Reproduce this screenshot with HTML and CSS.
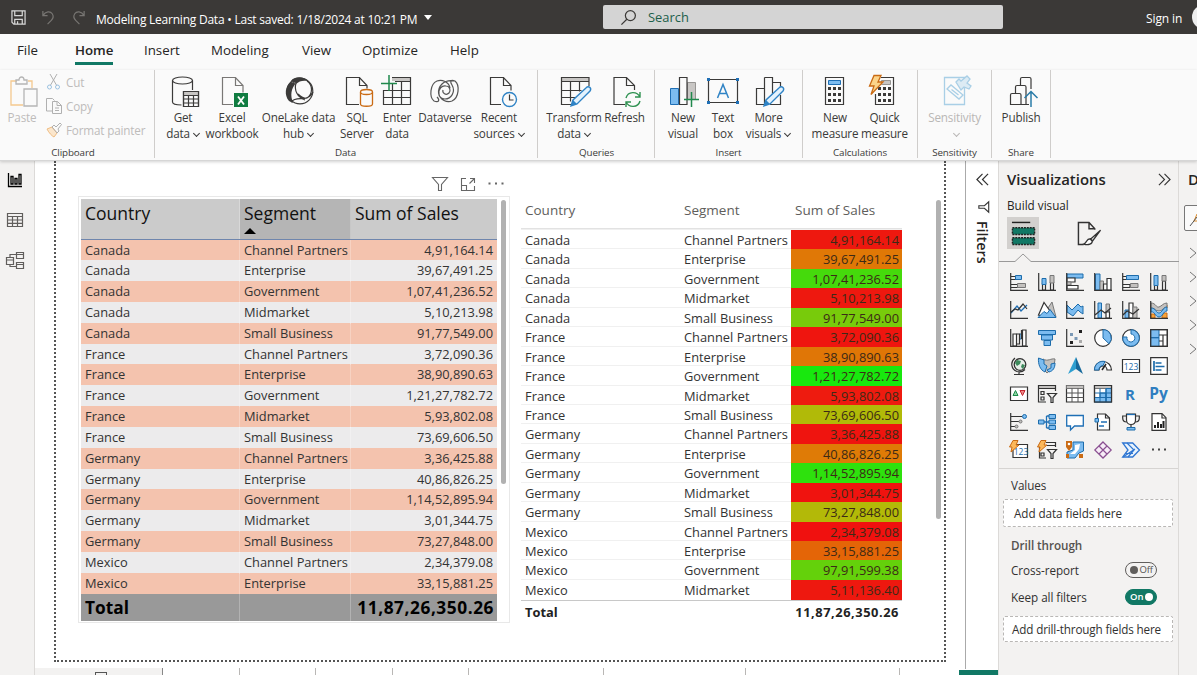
FILE: index.html
```html
<!DOCTYPE html>
<html lang="en">
<head>
<meta charset="utf-8">
<title>Modeling Learning Data</title>
<link rel="stylesheet" href="styles.css">
</head>
<body>
<div class="app">
<header class="titlebar">
  <svg class="tb-icon save" viewBox="0 0 16 16"><path d="M1 1h14v14H3l-2-2zM4 1v5h8V1M4 15v-5h8v5M7 12v3"/></svg>
  <svg class="tb-icon dim" viewBox="0 0 16 16"><path d="M2 1v5h5M2 6c3-5 8-5 10-2s1 5-1 7l-4 4"/></svg>
  <svg class="tb-icon dim" viewBox="0 0 16 16"><path d="M14 1v5H9M14 6C11 1 6 1 4 4s-1 5 1 7l4 4"/></svg>
  <div class="doc-title">Modeling Learning Data • Last saved: 1/18/2024 at 10:21 PM</div>
  <span class="caret"></span>
  <div class="search"><svg viewBox="0 0 18 18"><circle cx="11" cy="7" r="5.3"/><path d="M7.2 10.8 1.5 16.500"/></svg><span>Search</span></div>
  <div class="signin">Sign in</div>
  <div class="avatar"></div>
</header>
<nav class="tabs">
  <span class="tab t-file">File</span><span class="tab t-home active">Home</span><span class="tab t-insert">Insert</span><span class="tab t-model">Modeling</span><span class="tab t-view">View</span><span class="tab t-opt">Optimize</span><span class="tab t-help">Help</span>
</nav>
<section class="ribbon">
  <div class="group g-clip">
    <div class="clip">
      <div class="paste"><svg viewBox="0 0 32 32"><g fill="none" stroke-width="1.300"><path d="M7 5H1v24h12M18 5h4v7" stroke="#f5c98f"/><path d="M6 8V4h3c0-4 5-4 5 0h3v4z" stroke="#b5b5b5"/><path d="M14 13h13v17H14z" stroke="#b5b5b5"/></g></svg><span>Paste</span></div>
      <div class="clip-list">
        <div class="clip-item"><svg viewBox="0 0 16 16"><path d="M4 0l7 12M11 0L4 12" stroke="#b0b0b0"/><circle cx="3.500" cy="13" r="2" stroke="#9cc3e2"/><circle cx="11.500" cy="13" r="2" stroke="#9cc3e2"/></svg><span>Cut</span></div>
        <div class="clip-item"><svg viewBox="0 0 16 16"><path d="M6 13H.5V.5h6l2 2M6.500 3.500h5l4 4v8h-9zM11 3.500v4h4.500M9 10h4M9 12.500h4" stroke="#b0b0b0"/></svg><span>Copy</span></div>
        <div class="clip-item"><svg viewBox="0 0 16 16"><path d="M1 7l5-2 5 6-3 4c-2-1-5-4-7-8z" stroke="#f0bd82" fill="#fbe6cc"/><path d="M6 5l2-2 2 2 4-4 1.500 1.500L12 7l1 2-2 2z" stroke="#b0b0b0"/></svg><span>Format painter</span></div>
      </div>
    </div>
    <div class="glabel">Clipboard</div>
  </div>

  <div class="group g-data">
    <div class="btns">
      <div class="btn"><svg viewBox="0 0 32 32"><path class="k" d="M5.500 4.500V26c0 2 4 3 9 3M25.500 4.500V14"/><ellipse class="k" cx="15.500" cy="4.500" rx="10" ry="3.500"/><path class="kw" d="M16.500 15.500h15v15h-15z"/><path class="g" d="M17 16h14v3.500H17z"/><path class="k" d="M16.500 15.500h15v15h-15zM16.500 19.500h15M16.500 23h15M16.500 27h15M21.500 19.500v11M26.500 19.500v11"/></svg><span>Get<br>data<i class="chev"></i></span></div>
      <div class="btn"><svg viewBox="0 0 32 32"><path class="gy" d="M17 28.500H6.500v-27h13l7.500 8v7M19.500 1.500v8H27"/><path fill="#107c41" d="M18 17h14v14H18z"/><path d="M22 20.500l6 8M28 20.500l-6 8" stroke="#fff" stroke-width="1.800"/></svg><span>Excel<br>workbook</span></div>
      <div class="btn"><svg viewBox="0 0 32 32"><circle class="k" cx="17" cy="15" r="12.800"/><path d="M8 6C2 10 1 19 6 25l4 2c-3-8-2-14 3-20zM8 5c3-5 13-5 17 0-5-1-9 0-12 3z" fill="#3b3a39"/><path class="k" d="M13 7c-2 7 1 14 9 17M24 5c6 4 6 13 0 17-3 1-6-1-9-4M8 26c5-6 12-2 15-4 4-1 6-4 7-6"/></svg><span>OneLake data<br>hub<i class="chev"></i></span></div>
      <div class="btn"><svg viewBox="0 0 32 32"><path class="k" d="M18 28.500H5.500v-27h13l7.500 8v3M18.500 1.500v8H26"/><path d="M19.500 16v12c0 3 12 3 12 0V16" stroke="#ca6b14" stroke-width="1.300" fill="#fafafa"/><ellipse cx="25.500" cy="16" rx="6" ry="2.500" stroke="#ca6b14" stroke-width="1.300" fill="#fafafa"/></svg><span>SQL<br>Server</span></div>
      <div class="btn"><svg viewBox="0 0 32 32"><path class="g" d="M11 1h19v4H11z"/><path class="k" d="M11 1.500h18.500v27h-27V14M14 5.500h15.500M2.500 14.500h27M2.500 21.500h27M11.500 8v20.500M20.500 5.500v23"/><path d="M0 7.500h16M8-1v16" stroke="#20894d" stroke-width="1.500"/></svg><span>Enter<br>data</span></div>
      <div class="btn"><svg viewBox="0 0 32 32"><path class="gy2" d="M26 5c5 4 4 17-3 20-5 2-12-1-13-7-1-5 3-9 7-8 4 0 5 5 3 7-3 3-7 0-6-3M26 5c-5-2-5 1-3 4 4 7-1 14-7 14C8 23 8 13 13 8c4-4 8-4 13-3zM5 25C0 21 1 8 8 5c5-2 12 1 13 7M5 25c5 2 6-1 3-4"/></svg><span>Dataverse</span></div>
      <div class="btn"><svg viewBox="0 0 32 32"><path class="k" d="M18 28.500H7.500v-27h13l7.500 8v5M20.500 1.500v8H28"/><circle cx="26.500" cy="23.500" r="7" fill="#fafafa" stroke="#2f83c5" stroke-width="1.400"/><path class="k" d="M26.500 18.500v5.500h4"/></svg><span>Recent<br>sources<i class="chev"></i></span></div>
    </div>
    <div class="glabel">Data</div>
  </div>

  <div class="group g-query">
    <div class="btns">
      <div class="btn"><svg viewBox="0 0 32 32"><path class="g" d="M3 1h28v4.500H3z"/><path class="k" d="M31 10V1.500H3.500v27H13M3.500 5.500H31M3.500 14.500h20M3.500 21.500h14M12.500 5.500v20M21.500 5.500v10"/><path class="pen" d="M13 30l2-6 14-13c2-1 5 1 3 4L19 28z"/><path fill="#2f83c5" d="M13 30l2-6 4 4z"/></svg><span>Transform<br>data<i class="chev"></i></span></div>
      <div class="btn"><svg viewBox="0 0 32 32"><path class="k" d="M16 28.500H5v-27h12.500l8 8V14M17.500 1.500v8h8"/><path d="M17 22c2-7 11-7 14-1M31 16v5h-5M31 25c-2 7-11 7-14 1M17 31v-5h5" stroke="#2e9150" stroke-width="1.400" fill="none"/></svg><span>Refresh</span></div>
    </div>
    <div class="glabel">Queries</div>
  </div>

  <div class="group g-insert">
    <div class="btns">
      <div class="btn"><svg viewBox="0 0 32 32"><path fill="#7cbcf0" stroke="#1f6fb5" d="M3.500 12.500h8v16h-8z"/><path fill="#c8c6c4" stroke="#979593" d="M20.500 6.500h8v17h-8z"/><path class="kw" d="M12.500 1.500h7.500v27h-7.500z"/><path d="M17 23.500h15M24.500 16v15" stroke="#20894d" stroke-width="1.500"/></svg><span>New<br>visual</span></div>
      <div class="btn"><svg viewBox="0 0 32 32"><path class="k" d="M1.500 3.500h29v23h-29z"/><path d="M10.500 22L16 8.500 21.500 22M12.500 17.500h7" fill="none" stroke="#2f83c5" stroke-width="1.500"/><path fill="#1f6fb5" d="M0 2h3v3H0zM29 2h3v3h-3zM0 25h3v3H0zM29 25h3v3h-3z"/></svg><span>Text<br>box</span></div>
      <div class="btn"><svg viewBox="0 0 32 32"><path class="k" d="M3.500 12.500h8v16h-8zM11.500 1.500h8v18M11.500 12V1.500M19.500 6.500h8V12M27.500 19v9.500H17"/><path class="pen" d="M11 30l2-6 14-13c2-1 5 1 3 4L17 28z"/><path fill="#2f83c5" d="M11 30l2-6 4 4z"/></svg><span>More<br>visuals<i class="chev"></i></span></div>
    </div>
    <div class="glabel">Insert</div>
  </div>

  <div class="group g-calc">
    <div class="btns">
      <div class="btn"><svg viewBox="0 0 32 32"><path class="k" d="M6.500 1.500h18v27h-18z"/><path fill="#7cbcf0" stroke="#1f6fb5" d="M9.500 4.500h12v4h-12z"/><path class="dots" d="M9 12.500h13M9 18.500h13M9 24.500h13"/></svg><span>New<br>measure</span></div>
      <div class="btn"><svg viewBox="0 0 32 32"><path class="k" d="M12 1.500h12.500v27h-18V18"/><path fill="#c8c6c4" stroke="#979593" d="M12.500 4.500h9v4h-9z"/><path class="dots" d="M9 12.500h13M9 18.500h13M9 24.500h13"/><path d="M5-.5h7L9 6h5L2 18.500 5 10H.5z" fill="#fcd58a" stroke="#ca6b14" stroke-width="1.300"/></svg><span>Quick<br>measure</span></div>
    </div>
    <div class="glabel">Calculations</div>
  </div>

  <div class="group g-sens">
    <div class="btns">
      <div class="btn off"><svg viewBox="0 0 32 32"><g fill="#fafafa" stroke="#a9cfe6" stroke-width="1.300"><path d="M5.500 1.500h20v27h-20z"/><path d="M8 13l4-4 12 10-4 4zM12.500 13.500l7 5.500"/><path d="M17 6l3-3 2 2 6-5 3 3-3 4 4 3-2 3-5-2-3 3z" fill="#dcebf4"/></g></svg><span>Sensitivity<br><i class="chev"></i></span></div>
    </div>
    <div class="glabel">Sensitivity</div>
  </div>

  <div class="group g-share">
    <div class="btns">
      <div class="btn"><svg viewBox="0 0 32 32"><path class="k" d="M5.500 19c0-1 .5-1.500 1.500-1.500h7.500c1 0 1.500.5 1.500 1.500v9.500H5.500zM10.500 17.500V11c0-1 .5-1.500 1.500-1.500h7.500c1 0 1.500.5 1.500 1.500v17.500h-5M15.500 9.500V3c0-1 .5-1.500 1.500-1.500h7.500c1 0 1.500.5 1.500 1.500v10M21 28.500h3"/><path d="M26 31V16M19.500 22L26 15.500l6.500 6.500" stroke="#2a7ca8" stroke-width="1.500" fill="none"/></svg><span>Publish</span></div>
    </div>
    <div class="glabel">Share</div>
  </div>
</section>

<main class="work">
  <aside class="rail">
    <svg viewBox="0 0 18 18"><path d="M2.500 2v13.500H16M5 5.500h2v7.500H5zM9 7.500h2v5.500H9zM13 3.500h2V13h-2z" stroke="#000" stroke-width="1.300"/></svg>
    <svg viewBox="0 0 18 18"><path d="M1.500 2.500h15v13h-15zM1.500 5.500h15M1.500 9h15M1.500 12.300h15M6.500 5.500v10M11.500 5.500v10"/></svg>
    <svg viewBox="0 0 18 18"><path d="M.5 6.500h7v7h-7zM.5 9h7M10.500 1.500h7v6h-7zM10.500 3.500h7M10.500 11.500h7v6h-7zM10.500 13.500h7M4 6.500v-3h6.500M4 13.500v2h6.500"/></svg>
  </aside>

  <div class="stage">
    <div class="page">
      <div class="visual-left">
        <div class="vtools">
          <svg viewBox="0 0 18 18"><path d="M1.500 2.500h15l-6 7v6h-3v-6z"/></svg>
          <svg viewBox="0 0 18 18"><path d="M2.500 7V3.500H7M2.500 7v8.500h13V11M15.500 8V3.500H11M15.500 3.500l-5 5M2.500 10.500h5v5"/></svg>
          <svg viewBox="0 0 18 18"><path d="M1.500 8.500h2M8 8.500h2M14.500 8.500h2" stroke-width="2"/></svg>
        </div>
        <div class="card">
          <div class="lt">
            <div class="r h"><span>Country</span><span class="sorted">Segment<i></i></span><span>Sum of Sales</span></div>
            <div class="r"><span>Canada</span><span>Channel Partners</span><span>4,91,164.14</span></div>
            <div class="r"><span>Canada</span><span>Enterprise</span><span>39,67,491.25</span></div>
            <div class="r"><span>Canada</span><span>Government</span><span>1,07,41,236.52</span></div>
            <div class="r"><span>Canada</span><span>Midmarket</span><span>5,10,213.98</span></div>
            <div class="r"><span>Canada</span><span>Small Business</span><span>91,77,549.00</span></div>
            <div class="r"><span>France</span><span>Channel Partners</span><span>3,72,090.36</span></div>
            <div class="r"><span>France</span><span>Enterprise</span><span>38,90,890.63</span></div>
            <div class="r"><span>France</span><span>Government</span><span>1,21,27,782.72</span></div>
            <div class="r"><span>France</span><span>Midmarket</span><span>5,93,802.08</span></div>
            <div class="r"><span>France</span><span>Small Business</span><span>73,69,606.50</span></div>
            <div class="r"><span>Germany</span><span>Channel Partners</span><span>3,36,425.88</span></div>
            <div class="r"><span>Germany</span><span>Enterprise</span><span>40,86,826.25</span></div>
            <div class="r"><span>Germany</span><span>Government</span><span>1,14,52,895.94</span></div>
            <div class="r"><span>Germany</span><span>Midmarket</span><span>3,01,344.75</span></div>
            <div class="r"><span>Germany</span><span>Small Business</span><span>73,27,848.00</span></div>
            <div class="r"><span>Mexico</span><span>Channel Partners</span><span>2,34,379.08</span></div>
            <div class="r"><span>Mexico</span><span>Enterprise</span><span>33,15,881.25</span></div>
            <div class="r t"><span>Total</span><span></span><span>11,87,26,350.26</span></div>
          </div>
          <div class="sb sb-left"></div>
        </div>
      </div>
      <div class="visual-right">
        <div class="rt">
          <div class="r h"><span>Country</span><span>Segment</span><span>Sum of Sales</span></div>
          <div class="rows">
            <div class="r"><span>Canada</span><span>Channel Partners</span><span style="background:#ee180f">4,91,164.14</span></div>
            <div class="r"><span>Canada</span><span>Enterprise</span><span style="background:#e07806">39,67,491.25</span></div>
            <div class="r"><span>Canada</span><span>Government</span><span style="background:#45da0c">1,07,41,236.52</span></div>
            <div class="r"><span>Canada</span><span>Midmarket</span><span style="background:#ee180f">5,10,213.98</span></div>
            <div class="r"><span>Canada</span><span>Small Business</span><span style="background:#78cb0b">91,77,549.00</span></div>
            <div class="r"><span>France</span><span>Channel Partners</span><span style="background:#ef150f">3,72,090.36</span></div>
            <div class="r"><span>France</span><span>Enterprise</span><span style="background:#e07606">38,90,890.63</span></div>
            <div class="r"><span>France</span><span>Government</span><span style="background:#18e80e">1,21,27,782.72</span></div>
            <div class="r"><span>France</span><span>Midmarket</span><span style="background:#ee1b0f">5,93,802.08</span></div>
            <div class="r"><span>France</span><span>Small Business</span><span style="background:#b1ba08">73,69,606.50</span></div>
            <div class="r"><span>Germany</span><span>Channel Partners</span><span style="background:#ef140f">3,36,425.88</span></div>
            <div class="r"><span>Germany</span><span>Enterprise</span><span style="background:#df7b06">40,86,826.25</span></div>
            <div class="r"><span>Germany</span><span>Government</span><span style="background:#2ee10d">1,14,52,895.94</span></div>
            <div class="r"><span>Germany</span><span>Midmarket</span><span style="background:#f0130f">3,01,344.75</span></div>
            <div class="r"><span>Germany</span><span>Small Business</span><span style="background:#b3b908">73,27,848.00</span></div>
            <div class="r"><span>Mexico</span><span>Channel Partners</span><span style="background:#f0110f">2,34,379.08</span></div>
            <div class="r"><span>Mexico</span><span>Enterprise</span><span style="background:#e46507">33,15,881.25</span></div>
            <div class="r"><span>Mexico</span><span>Government</span><span style="background:#64d10b">97,91,599.38</span></div>
            <div class="r"><span>Mexico</span><span>Midmarket</span><span style="background:#ee180f">5,11,136.40</span></div>
          </div>
          <div class="r t"><span>Total</span><span></span><span>11,87,26,350.26</span></div>
        </div>
        <div class="sb sb-right"></div>
      </div>
    </div>
    <div class="pagetabs"><span class="pt p1"><i></i></span><span class="pt p2"></span><span class="pt p3"></span><span class="pt p2"></span><span class="pt p3"></span><span class="pt p4"></span><span class="pt p5"></span><span class="pt p6"></span><span class="pnew"></span></div>
  </div>

  <aside class="filters">
    <div class="filters-in">
      <svg viewBox="0 0 14 14"><path d="M7 1L1 7l6 6M13 1L7 7l6 6"/></svg>
      <svg class="fun" viewBox="0 0 14 14"><path d="M12.500 1v12l-5-4.500H1v-3h6.500z"/></svg>
      <span>Filters</span>
    </div>
    <div class="greenbar"></div>
  </aside>

  <aside class="viz">
    <div class="viz-head"><b>Visualizations</b><svg viewBox="0 0 14 14"><path d="M1 1l6 6-6 6M7 1l6 6-6 6"/></svg></div>
    <div class="build">Build visual</div>
    <div class="modes">
      <div class="mode on"><svg viewBox="0 0 26 26"><path d="M1 1.500h19" stroke="#222" stroke-width="1.500"/><path d="M1.500 7h23v7h-23zM1.500 17.500h23v7h-23z" fill="#117865" stroke="#222" stroke-width="1.500" stroke-dasharray="2 1"/></svg></div>
      <div class="mode"><svg viewBox="0 0 26 26"><path d="M7 24.500H1.500v-23h11l6 6.500V9M12.500 1.500V8h6" fill="none" stroke="#333" stroke-width="1.500"/><path d="M24.500 9.500L14 19l2 2zM14 18.500c-5 0-3 4-7 5.500 5 1.500 9 0 9-3.500z" fill="#fff" stroke="#333" stroke-width="1.400"/></svg></div>
    </div>
    <svg class="notch" viewBox="0 0 181 10"><path d="M0 8.500h16l8-7.500 8 7.500h149"/></svg>
    <div class="vgrid">
      <svg viewBox="0 0 18 18"><path class="k2" d="M1 3.500h5v3H1M1 11.500h7v3H1"/><path class="b" d="M5.500 2.500h6v4h-6z"/><path class="y" d="M7.500 10.500h8v4h-8z"/><path class="k2" d="M.7 0v17.300H18"/></svg>
      <svg viewBox="0 0 18 18"><path class="k2" d="M4.500 10.500h3v6.500h-3zM12.500 9.500h3V17h-3z"/><path class="b" d="M4 5.500h4v6H4z"/><path class="y" d="M12 2.500h4v7.500h-4z"/><path class="k2" d="M.7 0v17.300H18"/></svg>
      <svg viewBox="0 0 18 18"><path class="b" d="M1 1h16v4H1z"/><path class="w" d="M1 5h8v4H1z"/><path class="y" d="M1 9h4v3H1z"/><path class="w" d="M1 12.500h11V16H1z"/><path class="k2" stroke-width="1.800" d="M.7 0v17.300H18"/></svg>
      <svg viewBox="0 0 18 18"><path class="b" d="M1.500 1h4.500v16H1.500z"/><path class="y" d="M6 8h3.500v9H6z"/><path class="w" d="M9.500 11h3.500v6H9.500zM13 5.500h4V17h-4z"/><path class="k2" d="M.7 0v17.300H18"/></svg>
      <svg viewBox="0 0 18 18"><path class="k2" d="M1 3.500h5v3H1M1 11.500h7v3H1"/><path class="b" d="M4.500 2.500h12v4h-12z"/><path class="y" d="M8.500 10.500h7.500v4h-7.500z"/><path class="k2" d="M.7 0v17.300H18"/></svg>
      <svg viewBox="0 0 18 18"><path class="k2" d="M4.500 12h3v5h-3zM12.500 8h3v9h-3z"/><path class="b" d="M4 2.500h4v10H4z"/><path class="y" d="M12 2.500h4V8h-4z"/><path class="k2" d="M.7 0v17.300H18"/></svg>

      <svg viewBox="0 0 18 18"><path d="M1 12l6-7 4 5 6-6" class="bl"/><path class="k2" d="M1 11l4-3 3 1 5-6 4 5"/><path class="k2" d="M.7 0v17.300H18"/></svg>
      <svg viewBox="0 0 18 18"><path class="y" d="M10 7l4-6 4 15h-6z"/><path class="w" d="M.5 14L6 1.500 12 10 8 16z"/><path class="b" d="M0 16.500l6-6 3 2 3-4 6 8z"/></svg>
      <svg viewBox="0 0 18 18"><path class="b" d="M1 4l5 5 6-6 3 3 2-1v8l-3-2-2-2-5 6-6-4z"/><path class="k2" d="M.7 0v17.300H18"/></svg>
      <svg viewBox="0 0 18 18"><path class="b" d="M4 2h3.500v15H4z"/><path class="y" d="M12 3h3.500v8H12z"/><path class="w" d="M12 11h3.500v6H12z"/><path class="k2" d="M1 14l6-5 4 3 6-5M.7 0v17.300H18"/></svg>
      <svg viewBox="0 0 18 18"><path class="b" d="M3 9h4v8H3z"/><path class="w" d="M7 2h4v15H7z"/><path class="y" d="M11 6h4v11h-4z"/><path class="k2" d="M1 14l4-4 6 3 6-5M.7 0v17.300H18"/></svg>
      <svg viewBox="0 0 18 18"><path d="M1 4h3v3H1zM13 4h4v3h-4zM1 13h4v4H1zM12 12h5v5h-5z" fill="#f7a43b" stroke="#ca6b14"/><path class="y" d="M1 2c5 0 5 5 8 4s4-4 8-4v4c-4 0-4 4-8 4S5 7 1 7z"/><path class="b" d="M1 7c5 0 5 5 8 5s4-6 8-6v4c-4 0-4 6-8 6s-4-6-8-5z"/><path class="k2" d="M.7 0v17.300H18"/></svg>

      <svg viewBox="0 0 18 18"><path class="w" d="M3 5h3.500v12H3zM12.500 1H16v16h-3.500z"/><path class="b" d="M9.500 5h2v5h-2z"/><path class="k2" d="M.7 0v17.300H18M6.500 5h3v10h-3M11.500 1v9"/></svg>
      <svg viewBox="0 0 18 18"><path class="b" d="M.5 1.500h17v4H.5zM3.500 6h11v5h-11zM6 11.500h6.500v5H6z"/></svg>
      <svg viewBox="0 0 18 18"><path class="k2" d="M.7 0v17.300H18"/><path fill="#222" d="M13 1h3v3h-3zM4 12h3v3H4z"/><path fill="#7a98b5" d="M4 4h3v3H4zM8.500 8h3v3h-3z"/><path fill="#aaa" d="M13 11h3v3h-3z"/></svg>
      <svg viewBox="0 0 18 18"><circle class="w" cx="9" cy="9" r="8.300"/><path class="b" d="M9 9V.7a8.300 8.300 0 0 1 6 14z"/></svg>
      <svg viewBox="0 0 18 18"><circle class="w" cx="9" cy="9" r="8.300"/><path class="b" d="M9 .7A8.300 8.300 0 1 1 .8 8H5a4 4 0 1 0 4-3z"/></svg>
      <svg viewBox="0 0 18 18"><path class="w" d="M.7.700h16.600v16.600H.7z"/><path class="b" d="M.7.700H9v8H.7zM.7 8.700H9v8.600H.7z"/><path class="k2" d="M9 6h8M13 6v11M9 12h4M.7.700h16.600v16.600H.7z"/></svg>

      <svg viewBox="0 0 18 18"><circle cx="10" cy="7.500" r="5.800" fill="#e7efe9" stroke="#333" stroke-width="1.300"/><path d="M7 3l4 1-1 3-3 2-2-3zM12 7l3 1-2 4-2-2z" fill="#3d8a5c"/><path class="k2" d="M5 1C0 5 1 12 7 14.500c3 1 6 0 8-2M9 15v2.500M4 17.500h10"/></svg>
      <svg viewBox="0 0 18 18"><path class="y" d="M5 2c5 3 8-1 12 0l-1 8-7 6-5-5z"/><path class="b" d="M.5 1L6 3v4l3 2-2 6c-5-2-7-8-6.500-14zM13 7l4-1c0 5-2 8-6 9l-2-2 4-2z"/></svg>
      <svg viewBox="0 0 18 18"><path d="M10 0L2 17l8-5z" fill="#2e9fd0"/><path d="M10 0l7 17-7-5z" fill="#16699c"/></svg>
      <svg viewBox="0 0 18 18"><path class="w" d="M.5 13a8.500 8.500 0 0 1 17 0H13a4 4 0 0 0-8 0z"/><path class="b" d="M.5 13A8.500 8.500 0 0 1 11 4.500l-2 4A4 4 0 0 0 5 13z"/><path d="M8 13l4-6" stroke="#222" stroke-width="1.500"/></svg>
      <svg viewBox="0 0 18 18"><path class="w" d="M.5 2.500h17v13H.5z"/><text x="9" y="12.500" class="num">123</text></svg>
      <svg viewBox="0 0 18 18"><path class="w" stroke-width="1.500" d="M.7.700h16.600v16.600H.7z"/><path d="M4 4v10M5.500 6h6M5.500 9.500h9M5.500 13h6" stroke="#1d6cab" stroke-width="1.700"/></svg>

      <svg viewBox="0 0 18 18"><path class="w" d="M.5 2h17v13.500H.5z"/><path d="M3 10.500l2.500-5 2.500 5z" fill="#8bd3a3" stroke="#1d8c4a"/><path d="M10 5.500h5l-2.500 5z" fill="#e88" stroke="#c4262e"/></svg>
      <svg viewBox="0 0 18 18"><path class="y" d="M.5.500h17v3H.5z"/><path class="k2" d="M8 17H.5V.500h17V6M.5 3.500h17M3 6.500h3v3H3zM3 12h3v3H3zM18.500 8.500h-9l3.500 4v5h2v-5z"/></svg>
      <svg viewBox="0 0 18 18"><path class="w" d="M.5.500h17v16.500H.5z"/><path class="y" d="M.5.500h17v3H.5z"/><path d="M.5 8h17M.5 12.500h17M6 3.500V17M12 3.500V17" stroke="#555"/></svg>
      <svg viewBox="0 0 18 18"><path class="w" d="M.5.500h17v16.500H.5z"/><path class="y" d="M.5.500h17v3H.5z"/><path class="b" d="M12 3.500h5.500V17H12zM.5 12.500H12V17H.5zM6 8h6v4.500H6z"/><path d="M.5 8h17M.5 12.500h17M6 3.500V17M12 3.500V17" stroke="#1d6cab"/><path class="k2" d="M.5.500h17v16.500H.5z"/></svg>
      <svg viewBox="0 0 18 18"><text x="8" y="15" class="rr">R</text></svg>
      <svg viewBox="0 0 18 18"><text x="8.500" y="14" class="py">Py</text></svg>

      <svg viewBox="0 0 18 18"><path class="k2" d="M.7 0v17.300H18M1 3.500h11M1 8.500h8M1 13.500h4"/><circle class="b" cx="14.500" cy="3.500" r="2"/><circle class="y" cx="10.500" cy="8.500" r="1.500"/><circle class="y" cx="6.500" cy="13.500" r="1.500"/></svg>
      <svg viewBox="0 0 18 18"><path d="M6 9h5M8.500 3v12M8.500 3H11M8.500 15H11" class="bl"/><path class="b" d="M.5 7h5.500v4H.5zM11 1.500h6.500v4H11zM11 7h6.500v4H11zM11 12.500h6.500v4H11z"/></svg>
      <svg viewBox="0 0 18 18"><path d="M.7 2.500h16.600v10.500H8.500l-4 4V13H.7z" fill="#fff" stroke="#1f6fb5" stroke-width="1.300"/></svg>
      <svg viewBox="0 0 18 18"><path class="w" d="M3.500 1h8l4 4v12h-12z"/><path class="k2" d="M11.500 1v4h4"/><path class="bl" d="M7 9h6M5 13h5"/><path class="b" d="M1 5.500h3.500V9H1z"/></svg>
      <svg viewBox="0 0 18 18"><path class="w" d="M4.500 1h9v6c0 6-9 6-9 0z"/><path class="k2" d="M4 3H.7v2c0 3 2 4 4 4M14 3h3.300v2c0 3-2 4-4 4M9 12v3"/><path class="b" d="M5 14.500h8V17H5z"/><path class="bl" d="M5 1.500h8"/></svg>
      <svg viewBox="0 0 18 18"><path class="w" stroke-width="1.500" d="M2 .700h10l4 4v12.600H2z"/><path d="M5 15v-3M8 15V9M11 15v-4M13.500 15V8" stroke="#222" stroke-width="2"/><path class="k2" d="M12 1v4h4"/></svg>

      <svg viewBox="0 0 18 18"><path class="w" d="M3 3.500h14.500v13H3z"/><text x="11" y="13.500" class="num">123</text><path d="M3-.5h5L6 4h3L1 11l1-5H-.5z" fill="#fcb85a" stroke="#ca6b14"/></svg>
      <svg viewBox="0 0 18 18"><path class="k2" d="M8 17H1.500V3M8 1.500h9.500V6M9 4.500h8M3 12h3v3H3zM18.500 8.500h-9l3.500 4v5h2v-5z"/><path d="M3-.5h5L6 4h3L1 11l1-5H-.5z" fill="#fcb85a" stroke="#ca6b14"/></svg>
      <svg viewBox="0 0 18 18"><path class="b" d="M7 1h10.500v9L13 12l-4 5H1v-6L7 9z"/><path fill="#fff" d="M9 4l5-1-1 5-4 5H4l5-4z"/><path d="M0 0h6v6L3 10 0 6zM13 13h4v4h-4zM0 13h3v4H0z" fill="#ca6b14"/><circle cx="3" cy="3" r="1.300" fill="#fff"/></svg>
      <svg viewBox="0 0 18 18"><path d="M9 .8L17.200 9 9 17.200.8 9zM5 5l8 8M13 5l-8 8M9 1l4 4-4 4-4-4zM9 9l4 4-4 4-4-4z" fill="#f7edf7" stroke="#8a4f91" stroke-width="1.200"/></svg>
      <svg viewBox="0 0 18 18"><path d="M.7 2h10l6.800 7-6.800 7h-10L6 9z" fill="#eaf4fd" stroke="#2f76d2" stroke-width="1.300"/><path d="M5 2l7 7-6 7M3 12.500h8M1 16l12-8" stroke="#2f76d2" fill="none" stroke-width="1.200"/></svg>
      <svg viewBox="0 0 18 18"><path d="M2 8.500h2M8 8.500h2M14 8.500h2" stroke="#444" stroke-width="1.800"/></svg>
    </div>
    <div class="wells">
      <div class="wlabel">Values</div>
      <div class="well w1">Add data fields here</div>
      <div class="wlabel dt">Drill through</div>
      <div class="trow"><span>Cross-report</span><div class="tog"><i></i>Off</div></div>
      <div class="trow keep"><span>Keep all filters</span><div class="tog yes">On<i></i></div></div>
      <div class="well w2">Add drill-through fields here</div>
    </div>
  </aside>

  <aside class="data">
    <b>D</b>
    <div class="dbox"><svg viewBox="0 0 12 26"><path d="M12 8L9 15h3" stroke="#d98a2b"/><path d="M5 20l7-9" stroke="#555"/></svg></div>
    <div class="chevs"><svg viewBox="0 0 8 12"><path d="M1 1l6 5-6 5"/></svg><svg viewBox="0 0 8 12"><path d="M1 1l6 5-6 5"/></svg><svg viewBox="0 0 8 12"><path d="M1 1l6 5-6 5"/></svg><svg viewBox="0 0 8 12"><path d="M1 1l6 5-6 5"/></svg><svg viewBox="0 0 8 12"><path d="M1 1l6 5-6 5"/></svg></div>
  </aside>
</main>
</div>
</body>
</html>
```
FILE: styles.css
```css
* { box-sizing: border-box; }
body { margin: 0; font-family: "Open Sans", "Noto Sans", sans-serif; color: #252423; }
.app { width: 1197px; height: 675px; display: flex; flex-direction: column; overflow: hidden; background: #fff; }
svg { display: block; flex: none; overflow: visible; }
i { font-style: normal; }

/* title bar */
.titlebar { height: 34px; flex: none; background: #3b3937; color: #fff; display: flex; align-items: center; padding-left: 11px; }
.titlebar > * { flex: none; }
.tb-icon { width: 15px; height: 15px; fill: none; stroke: #d8d8d8; stroke-width: 1.3; margin-right: 15px; }
.tb-icon.dim { stroke: #777572; }
.doc-title { width: 322px; margin-left: -5px; margin-top: 6px; font-size: 12px; line-height: 16px; letter-spacing: -0.23px; white-space: nowrap; }
.caret { border: 4.5px solid transparent; border-top: 5px solid #fff; border-bottom: 0; margin-left: 6px; }
.search { width: 400px; height: 24px; margin-left: 171px; background: #d4d4d4; border-radius: 2px; display: flex; align-items: center; padding-left: 17px; gap: 11px; color: #1c5f4a; font-size: 12.9px; }
.search svg { width: 17px; height: 17px; fill: none; stroke: #3b3937; stroke-width: 1.3; }
.signin { margin-left: 143px; font-size: 12px; letter-spacing: -0.1px; white-space: nowrap; width: 38px; margin-top: 2px; }
.avatar { width: 24px; height: 24px; border-radius: 50%; background: #eee; margin-left: 8px; }

/* tabs */
.tabs { height: 36px; flex: none; background: #fafafa; display: flex; align-items: flex-start; padding: 5px 0 0 17px; font-size: 13.3px; }
.tab { height: 26px; line-height: 23px; white-space: nowrap; }
.t-file { width: 58px; }
.t-home { width: 38px; margin-right: 31px; font-weight: 600; }
.active { border-bottom: 3px solid #117865; }
.t-insert { width: 67px; }
.t-model { width: 91px; }
.t-view { width: 60px; }
.t-opt { width: 88px; }

/* ribbon */
.ribbon { height: 91px; flex: none; background: #fafafa; display: flex; border-bottom: 1px solid #d6d6d6; box-shadow: 0 1px 3px rgba(0,0,0,.18); position: relative; padding-bottom: 2px; }
.group { border-right: 1px solid #cfcdcb; display: flex; flex-direction: column; justify-content: space-between; }
.g-clip { width: 155px; }
.g-data { width: 383px; padding-left: 5px; }
.g-query { width: 117px; padding-left: 9px; }
.g-insert { width: 148px; padding-left: 8px; }
.g-calc { width: 115px; padding-left: 8px; }
.g-sens { width: 74px; }
.g-share { width: 59px; }
.btns { display: flex; padding-top: 6px; }
.g-data .btns { display: grid; grid-template-columns: 46px 52px 81px 36px 44px 52px 56px; }
.g-query .btns { display: grid; grid-template-columns: 54px 47px; }
.g-insert .btns { display: grid; grid-template-columns: 40px 40px 51px; }
.g-calc .btns { display: grid; grid-template-columns: 48px 51px; }
.g-sens .btns, .g-share .btns { display: grid; grid-template-columns: 100%; }
.btn { display: flex; flex-direction: column; align-items: center; font-size: 11.7px; letter-spacing: -0.17px; line-height: 16px; text-align: center; white-space: nowrap; color: #3b3a39; }
.btn svg { width: 32px; height: 32px; margin-bottom: 1px; }
.btn.off { color: #b9b7b5; }
.chev { display: inline-block; width: 5px; height: 5px; border: solid currentColor; border-width: 0 1.300px 1.300px 0; transform: rotate(45deg); margin: 0 1px 2px 4px; }
.glabel { font-size: 9.8px; line-height: 10px; letter-spacing: -0.1px; text-align: center; color: #3b3a39; margin-left: -8px; padding-right: 0; }
.g-data .glabel { margin-left: -6px; }
.g-sens .glabel, .g-share .glabel { margin-left: 0; }
.k { fill: none; stroke: #3b3a39; stroke-width: 1.2; }
.kw { fill: #fafafa; stroke: #3b3a39; stroke-width: 1.2; }
.g { fill: #c8c6c4; }
.gy { fill: none; stroke: #797775; stroke-width: 1.2; }
.gy2 { fill: none; stroke: #555; stroke-width: 1.2; }
.pen { fill: #e3f2fd; stroke: #2f83c5; stroke-width: 1.4; }
.dots { stroke: #3b3a39; stroke-width: 3; stroke-dasharray: 3 2; }
.clip { display: flex; padding: 4px 0 0 7px; color: #bebcba; font-size: 11.7px; letter-spacing: -0.17px; }
.paste { width: 30px; display: flex; flex-direction: column; align-items: center; line-height: 16px; }
.paste svg { width: 32px; height: 32px; margin: 2px 0 1px 8px; }
.clip-list { display: flex; flex-direction: column; gap: 8px; padding-left: 9px; }
.clip-item { display: flex; gap: 4px; align-items: center; line-height: 16px; white-space: nowrap; }
.clip-item svg { width: 16px; height: 16px; fill: none; }

/* work area */
.work { flex: 1; min-height: 0; display: flex; }
.rail { width: 35px; background: #f3f2f1; border-right: 1px solid #dcdad8; display: flex; flex-direction: column; gap: 22px; padding: 10px 0 0 6px; }
.rail svg { width: 18px; height: 18px; fill: none; stroke: #605e5c; stroke-width: 1.2; }
.stage { width: 930px; display: flex; flex-direction: column; justify-content: space-between; padding-left: 19px; }
.page { width: 892px; height: 501px; border: 2px dotted #555; border-top: 0; display: flex; padding-left: 22px; }
.visual-left { width: 432px; padding-top: 14px; }
.vtools { display: flex; justify-content: flex-end; gap: 10px; padding-right: 5px; height: 21px; }
.vtools svg { width: 18px; height: 18px; fill: none; stroke: #666; stroke-width: 1.1; }
.card { height: 427px; border: 1px solid #e8e8e8; display: flex; padding: 2px 0 0 2px; gap: 4px; }
.lt { width: 416px; }
.r { display: grid; white-space: nowrap; }
.lt .r { grid-template-columns: 159px 111px 146px; height: 20.83px; line-height: 21.6px; font-size: 12.85px; background: #ecebec; color: #333; }
.lt .r:nth-child(even) { background: #f4c3ae; }
.lt .r span { padding: 0 4px; border-right: 1px solid rgba(255,255,255,.25); }
.lt .r span:last-child { text-align: right; border: 0; }
.lt .h { height: 40.5px; background: #cbcbcb; color: #111; font-size: 17.5px; line-height: 29px; border-bottom: 1px solid #6f86ad; }
.lt .h span:last-child { text-align: left; }
.lt .h .sorted { background: #b5b5b5; display: flex; flex-direction: column; }
.sorted i { border: 6px solid transparent; border-bottom-color: #000; border-top: 0; width: 0; }
.lt .r.t { height: 27px; line-height: 28px; background: #999; color: #000; font-weight: 700; font-size: 17.3px; }
.lt .r.t span:last-child { letter-spacing: 0.55px; padding-right: 3px; }
.sb { width: 5px; border-radius: 3px; background: #b1b1b1; }
.sb-left { height: 284px; margin-top: 1px; }
.visual-right { flex: 1; display: flex; padding: 39px 0 0 11px; gap: 34px; }
.rt { width: 381px; }
.rt .r { grid-template-columns: 159px 111px 111px; font-size: 12.85px; line-height: 20px; height: 19.44px; border-top: 1px solid #f0f0f0; color: #333; }
.rt .r span { padding: 0 4px; }
.rt .r:not(.h):not(.t) span:last-child { border-bottom: 1px solid #d9a25c; }
.rt .r span:last-child { text-align: right; padding-right: 3px; color: #3c2a16; }
.rt .h { height: 29px; line-height: 21px; border: 0; border-bottom: 1px solid #e2e2e2; color: #605e5c; font-size: 13.5px; }
.rt .r.h span:last-child { text-align: left; color: #605e5c; border: 0; }
.rt .rows { border-bottom: 1px solid #c8c8c8; height: 371.5px; overflow: hidden; }
.rt .t { font-weight: 700; color: #222; line-height: 22px; border: 0; height: 22px; }
.rt .r.t span:last-child { color: #222; letter-spacing: 0.55px; }
.sb-right { height: 319px; }
.pagetabs { display: flex; height: 7px; margin-left: -19px; }
.pt { border-right: 1px solid #b9b7b5; }
.p1 { width: 128px; background: #f3f2f1; display: flex; padding: 4px 0 0 60px; border-color: #888; }
.p1 i { width: 12px; height: 3px; border: 1px solid #555; border-bottom: 0; }
.p2 { width: 77px; }
.p3 { width: 76px; }
.p4 { width: 135px; }
.p5 { width: 142px; }
.p6 { width: 154px; }
.pnew { margin: 2px 0 0 59px; flex: 1; background: #117865; }

/* filters */
.filters { width: 33px; display: flex; flex-direction: column; justify-content: space-between; }
.filters-in { border-left: 1px solid #aaa; height: 508px; display: flex; flex-direction: column; align-items: center; padding-top: 12px; gap: 14px; }
.filters svg { width: 13px; height: 13px; fill: none; stroke: #333; stroke-width: 1.3; }
.filters .fun { width: 12px; height: 12px; margin: 1px 0 0 4px; }
.filters span { writing-mode: vertical-rl; font-size: 14.3px; font-weight: 600; line-height: 18px; margin-top: -6px; }
.greenbar { height: 5px; background: #117865; }

/* visualizations */
.viz { width: 181px; background: #f3f2f1; border-left: 1px solid #dcdad8; border-right: 1px solid #dcdad8; }
.viz-head { display: flex; justify-content: space-between; align-items: center; padding: 8px 7px 0 8px; font-size: 14.9px; line-height: 20px; }
.viz-head b, .data b { font-weight: 600; }
.viz-head svg { width: 13px; height: 13px; fill: none; stroke: #333; stroke-width: 1.2; }
.build { padding: 8px 0 0 8px; font-size: 11.7px; line-height: 16px; font-weight: 500; }
.modes { display: flex; gap: 34px; padding: 4px 0 0 8px; }
.mode { width: 32px; height: 32px; display: flex; align-items: center; justify-content: center; }
.mode.on { background: #d2d0ce; }
.mode svg { width: 25px; height: 25px; }
.notch { width: 181px; height: 10px; margin-top: 4px; fill: none; stroke: #999; }
.vgrid { display: grid; grid-template-columns: repeat(6, 18px); gap: 10px; padding: 10px 0 9px 11px; border-bottom: 1px solid #d6d4d2; }
.vgrid svg { width: 18px; height: 18px; }
.k2 { fill: none; stroke: #333; stroke-width: 1.2; }
.b { fill: #7cbcf0; stroke: #1d6cab; }
.y { fill: #c3c1bf; stroke: #777; }
.w { fill: #fff; stroke: #333; stroke-width: 1.2; }
.bl { fill: none; stroke: #1f6fb5; stroke-width: 1.3; }
.num { font-size: 8.5px; fill: #1d6cab; text-anchor: middle; }
.rr { font-size: 15px; font-weight: 700; fill: #2f7ec0; text-anchor: middle; }
.py { font-size: 15.500px; font-weight: 700; fill: #2f7ec0; text-anchor: middle; }
.wells { font-size: 11.7px; line-height: 16px; padding: 8px 5px 0 4px; color: #323130; letter-spacing: -0.06px; }
.wlabel { padding-left: 8px; }
.well { background: #fff; border: 1px dashed #b9b7b5; border-radius: 2px; height: 28px; line-height: 26px; padding-left: 10px; white-space: nowrap; }
.w1 { margin-top: 6px; }
.dt { margin-top: 10px; font-weight: 600; color: #55534f; }
.trow { display: flex; justify-content: space-between; align-items: center; padding: 0 16px 0 8px; margin-top: 9px; height: 16px; }
.keep { margin-top: 11px; }
.tog { width: 32px; height: 16px; border: 1px solid #605e5c; border-radius: 8px; font-size: 9.5px; color: #555; display: flex; align-items: center; justify-content: space-between; padding: 0 3px 0 4px; line-height: 14px; }
.tog i { width: 8px; height: 8px; border-radius: 50%; background: #605e5c; }
.yes { background: #117865; border-color: #117865; color: #fff; font-weight: 600; }
.yes i { background: #fff; }
.w2 { margin-top: 11px; height: 26px; line-height: 24px; padding-left: 8px; letter-spacing: -0.15px; }

/* data pane */
.data { width: 18px; background: #f3f2f1; overflow: hidden; padding: 8px 0 0 5px; }
.data b { display: block; font-size: 14.9px; line-height: 20px; padding-left: 4px; }
.dbox { width: 30px; height: 26px; margin-top: 16px; border: 1px solid #777; border-radius: 2px; background: #fafafa; }
.dbox svg { width: 12px; height: 26px; fill: none; }
.chevs { display: flex; flex-direction: column; gap: 12px; padding: 16px 0 0 5px; }
.chevs svg { width: 8px; height: 12px; fill: none; stroke: #777; }
```
